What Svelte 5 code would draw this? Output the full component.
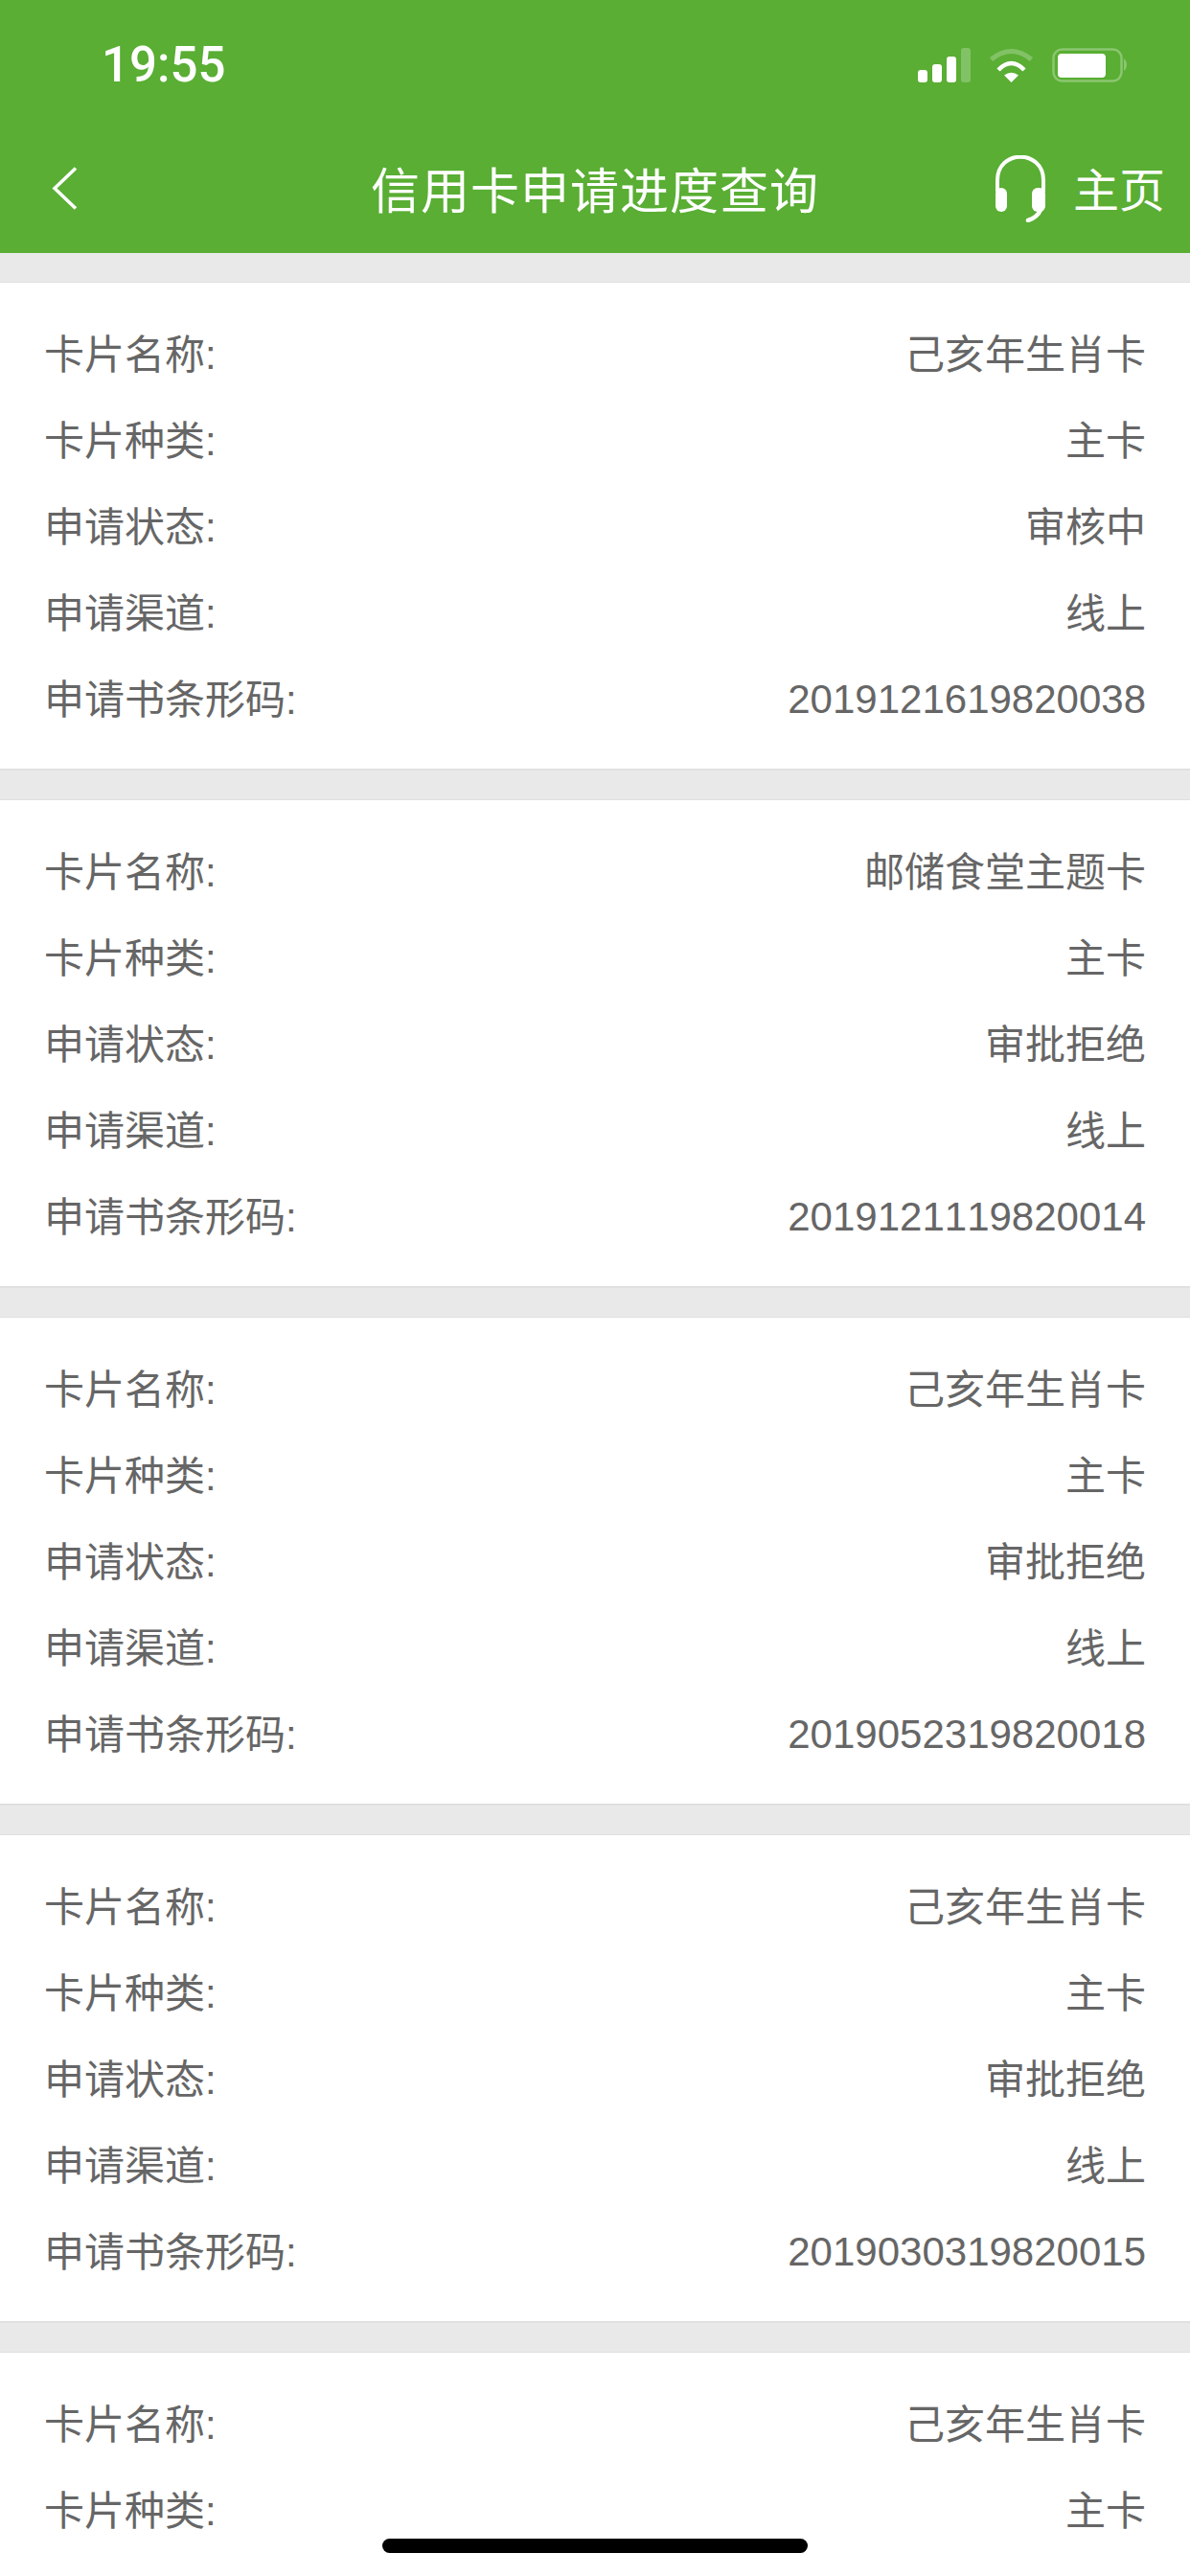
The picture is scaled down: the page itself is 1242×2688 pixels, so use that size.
<script lang="ts">
  const labels = ["卡片名称:", "卡片种类:", "申请状态:", "申请渠道:", "申请书条形码:"];

  // the last card runs off the bottom of the screen
  const cards = [
    ["己亥年生肖卡", "主卡", "审核中", "线上", "2019121619820038"],
    ["邮储食堂主题卡", "主卡", "审批拒绝", "线上", "2019121119820014"],
    ["己亥年生肖卡", "主卡", "审批拒绝", "线上", "2019052319820018"],
    ["己亥年生肖卡", "主卡", "审批拒绝", "线上", "2019030319820015"],
    ["己亥年生肖卡", "主卡"],
  ];
</script>

<div class="screen">
  <header class="header">
    <div class="status">
      <span class="time">19:55</span>
      <div class="status_icons">
        <svg width="55" height="37" viewBox="0 0 55 37" fill="#fff">
          <rect x="0" y="23" width="10" height="13" rx="3" />
          <rect x="15" y="17" width="10" height="19" rx="3" />
          <rect x="30" y="9" width="10" height="27" rx="3" />
          <rect x="45" y="0" width="10" height="36" rx="3" opacity="0.25" />
        </svg>
        <svg width="47" height="37" viewBox="0 0 47 37" fill="none" stroke="#fff">
          <path d="M2.5 12 Q23.5 -5 44.5 12" stroke-width="5" opacity="0.25" />
          <path d="M10 23 Q23.5 9 37 23" stroke-width="4.5" />
          <path d="M23.5 36 L16 28.500 Q23.5 23 31 28.500 Z" fill="#fff" stroke="none" />
        </svg>
        <svg width="79" height="37" viewBox="0 0 79 37">
          <rect x="1.5" y="1.5" width="71" height="33" rx="9" fill="none" stroke="#fff" stroke-width="2.500" opacity="0.3" />
          <rect x="6" y="6" width="50" height="25" rx="4" fill="#fff" />
          <path d="M75 11 C79 14 79 21 75 24 Z" fill="#fff" opacity="0.3" />
        </svg>
      </div>
    </div>
    <nav class="nav">
      <svg class="back" width="28" height="45" viewBox="0 0 28 45" fill="none" stroke="#fff" stroke-width="3.5">
        <path d="M26 1.5 L4 22.5 L26 43.5" />
      </svg>
      <h1 class="title">信用卡申请进度查询</h1>
      <div class="nav_right">
        <svg class="headset" width="52" height="70" viewBox="0 0 52 70" fill="none">
          <path d="M2 38 V26 C2 -6.500 50 -6.500 50 26 V38" stroke="#fff" stroke-width="4" />
          <rect x="0" y="34" width="12" height="25" rx="6" fill="#fff" />
          <rect x="38" y="34" width="14" height="25" rx="6" fill="#fff" />
          <path d="M47 57 C45 62 40 66 34 68" stroke="#fff" stroke-width="4.500" stroke-linecap="round" />
        </svg>
        <span class="home">主页</span>
      </div>
    </nav>
  </header>

  <main class="list">
    {#each cards as card}
      <section class="card">
        {#each card as value, i}
          <div class="row">
            <span>{labels[i]}</span>
            <span class:code={i === 4}>{value}</span>
          </div>
        {/each}
      </section>
    {/each}
  </main>

  <div class="home_bar"></div>
</div>

<style>
  :global(body) {
    margin: 0;
  }

  .screen {
    position: relative;
    width: 1242px;
    height: 2688px;
    overflow: hidden;
    background: #e9e9e9;
    font-family: "Liberation Sans", "Noto Sans CJK SC", sans-serif;
    font-kerning: none;
  }

  .header {
    height: 264px;
    background: #59ae33;
    color: #fff;
  }

  .status {
    height: 132px;
    padding: 4px 65px 0 106px;
    box-sizing: border-box;
    display: flex;
    justify-content: space-between;
    align-items: center;
  }

  .time {
    font-family: Roboto, sans-serif;
    font-size: 51px;
    font-weight: 500;
    line-height: 44px;
  }

  .status_icons {
    display: flex;
    align-items: center;
    gap: 19px;
  }

  .status_icons svg {
    display: block;
  }

  .nav {
    position: relative;
    height: 132px;
    padding: 0 26px 0 53px;
    display: flex;
    justify-content: space-between;
    align-items: center;
  }

  .back {
    margin-top: -4px;
  }

  .title {
    position: absolute;
    left: 0;
    right: 0;
    top: 3px;
    margin: 0;
    text-align: center;
    font-size: 51px;
    font-weight: 400;
    line-height: 132px;
    letter-spacing: 1px;
  }

  .nav_right {
    display: flex;
    align-items: center;
    gap: 29px;
    font-size: 48px;
  }

  .headset {
    margin-top: -2px;
  }

  .home {
    margin-top: -7px;
  }

  .card {
    margin-top: 30px;
    padding: 26px 46px 31px;
    background: #fff;
    border-top: 1px solid #e0e0e0;
    border-bottom: 2px solid #e0e0e0;
  }

  .row {
    height: 90px;
    display: flex;
    justify-content: space-between;
    align-items: center;
    font-size: 42px;
    color: #666;
  }

  .code {
    margin-top: 8px;
  }

  .home_bar {
    position: absolute;
    left: 399px;
    top: 2649px;
    width: 444px;
    height: 15px;
    border-radius: 8px;
    background: #000;
  }
</style>
